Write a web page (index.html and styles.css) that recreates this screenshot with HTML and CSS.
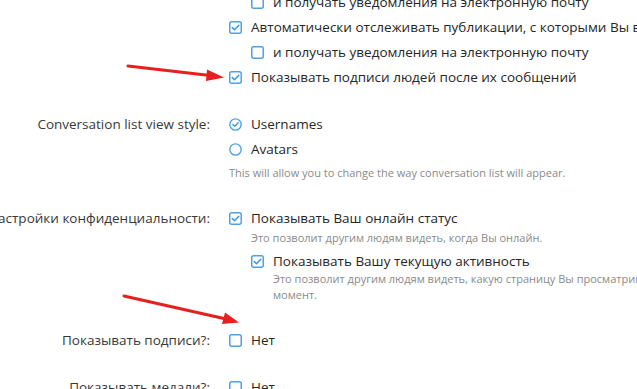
FILE: index.html
```html
<!DOCTYPE html>
<html>
    <head>
        <title>Настройки</title>
        <link rel="stylesheet" href="styles.css">
    </head>
    <body>
        <div class="form">

            <!-- Options without a label -->
            <div class="form-row">
                <div class="form-label"></div>
                <ul class="choices">
                    <li class="choice nested">
                        <svg class="box" viewBox="0 0 13 13"><rect x="0.75" y="0.75" width="11.5" height="11.5" rx="2"/></svg>
                        <span>и получать уведомления на электронную почту</span>
                    </li>
                    <li class="choice">
                        <svg class="box" viewBox="0 0 13 13"><rect x="0.75" y="0.75" width="11.5" height="11.5" rx="2"/><path d="M3.3 6.6 L5.5 8.7 L9.8 4.3"/></svg>
                        <span>Автоматически отслеживать публикации, с которыми Вы взаимодействуете</span>
                    </li>
                    <li class="choice nested">
                        <svg class="box" viewBox="0 0 13 13"><rect x="0.75" y="0.75" width="11.5" height="11.5" rx="2"/></svg>
                        <span>и получать уведомления на электронную почту</span>
                    </li>
                    <li class="choice">
                        <svg class="box" viewBox="0 0 13 13"><rect x="0.75" y="0.75" width="11.5" height="11.5" rx="2"/><path d="M3.3 6.6 L5.5 8.7 L9.8 4.3"/></svg>
                        <span>Показывать подписи людей после их сообщений</span>
                    </li>
                </ul>
            </div>

            <!-- Conversation list -->
            <div class="form-row">
                <div class="form-label"><span>Conversation list view style:</span></div>
                <ul class="choices">
                    <li class="choice">
                        <svg class="box" viewBox="0 0 14 14"><circle cx="7" cy="7" r="6.1"/><path d="M4.2 7.1 L6.2 9 L9.9 5.2"/></svg>
                        <span>Usernames</span>
                    </li>
                    <li class="choice">
                        <svg class="box" viewBox="0 0 14 14"><circle cx="7" cy="7" r="6.1"/></svg>
                        <span>Avatars</span>
                    </li>
                    <li class="hint flush">This will allow you to change the way conversation list will appear.</li>
                </ul>
            </div>

            <!-- Privacy -->
            <div class="form-row">
                <div class="form-label"><span>Настройки конфиденциальности:</span></div>
                <ul class="choices">
                    <li class="choice">
                        <svg class="box" viewBox="0 0 13 13"><rect x="0.75" y="0.75" width="11.5" height="11.5" rx="2"/><path d="M3.3 6.6 L5.5 8.7 L9.8 4.3"/></svg>
                        <span>Показывать Ваш онлайн статус</span>
                    </li>
                    <li class="hint">Это позволит другим людям видеть, когда Вы онлайн.</li>
                    <li class="choice nested">
                        <svg class="box" viewBox="0 0 13 13"><rect x="0.75" y="0.75" width="11.5" height="11.5" rx="2"/><path d="M3.3 6.6 L5.5 8.7 L9.8 4.3"/></svg>
                        <span>Показывать Вашу текущую активность</span>
                    </li>
                    <li class="hint nested-hint">Это позволит другим людям видеть, какую страницу Вы просматриваете в данный момент.</li>
                </ul>
            </div>

            <div class="form-row">
                <div class="form-label"><span>Показывать подписи?:</span></div>
                <ul class="choices">
                    <li class="choice">
                        <svg class="box" viewBox="0 0 13 13"><rect x="0.75" y="0.75" width="11.5" height="11.5" rx="2"/></svg>
                        <span>Нет</span>
                    </li>
                </ul>
            </div>

            <div class="form-row">
                <div class="form-label"><span>Показывать медали?:</span></div>
                <ul class="choices">
                    <li class="choice">
                        <svg class="box" viewBox="0 0 13 13"><rect x="0.75" y="0.75" width="11.5" height="11.5" rx="2"/></svg>
                        <span>Нет</span>
                    </li>
                </ul>
            </div>
        </div>

        <!-- Red annotation arrows drawn over the form -->
        <svg class="arrows" width="637" height="389" viewBox="0 0 637 389">
            <line x1="128" y1="66" x2="210" y2="75.5"/>
            <polygon points="224,77.5 207,69.5 206,81"/>
            <line x1="124" y1="296" x2="226" y2="319"/>
            <polygon points="239,322.5 225,312.5 222,324"/>
        </svg>
    </body>
</html>
```

FILE: styles.css
```css
body {
  margin: 0;
  background: #fff;
  font-family: "Open Sans", "Noto Sans", sans-serif;
  font-size: 13.5px;
  color: #262626;
  overflow: hidden;
}

.form {
  margin-top: -8px;
}

.form-row {
  display: flex;
  gap: 19px;
  padding-bottom: 27px;
}

.form-label {
  width: 210px;
  flex: none;
  display: flex;
  justify-content: flex-end;
  line-height: 20px;
  color: #383838;
  white-space: nowrap;
  overflow: hidden;
}

.form-label span {
  flex: none;
}

.choices {
  list-style: none;
  margin: 0;
  padding: 0;
  min-width: 0;
}

.choice {
  display: flex;
  align-items: center;
  gap: 9px;
  line-height: 20px;
  white-space: nowrap;
  margin-top: 5px;
}

.choice:first-child {
  margin-top: 0;
}

.choice.nested {
  padding-left: 22px;
}

.box {
  width: 13px;
  height: 13px;
  flex: none;
}

.box rect,
.box circle {
  fill: #fff;
  stroke: #4ea1e4;
  stroke-width: 1.5;
}

.box path {
  fill: none;
  stroke: #3d97df;
  stroke-width: 1.5;
  stroke-linecap: round;
  stroke-linejoin: round;
}

.hint {
  font-size: 11px;
  line-height: 16px;
  color: #8a8a8a;
  padding-left: 22px;
  margin-top: 2px;
  width: 386px;
}

.hint.flush {
  padding-left: 0;
  margin-top: 6px;
}

.hint.nested-hint {
  padding-left: 44px;
  margin-top: 0;
  width: 470px;
}

.arrows {
  position: absolute;
  left: 0;
  top: 0;
  pointer-events: none;
}

.arrows line {
  stroke: #e5201e;
  stroke-width: 3;
  stroke-linecap: round;
}

.arrows polygon {
  fill: #e5201e;
}
```
